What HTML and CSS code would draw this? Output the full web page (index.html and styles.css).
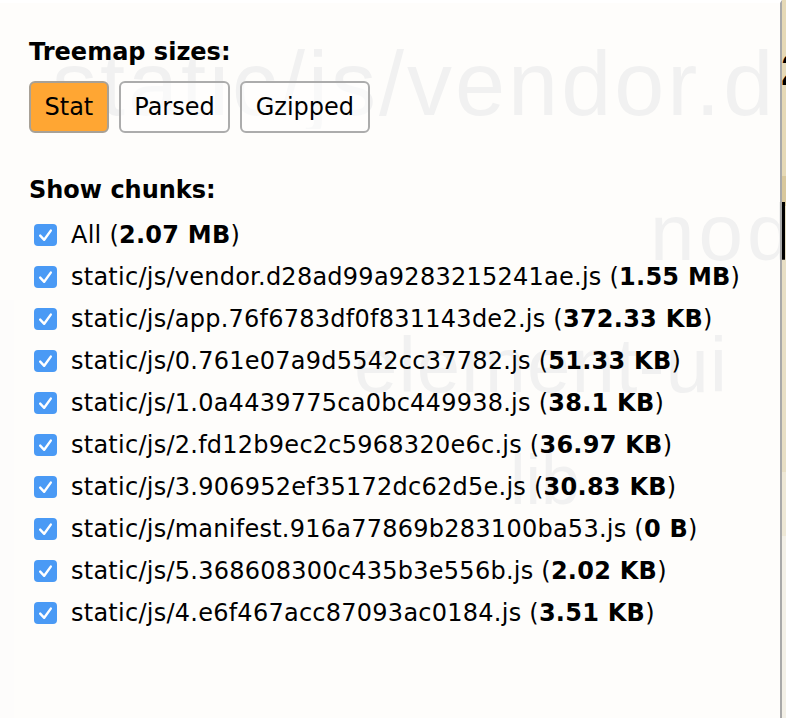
FILE: index.html
```html
<!DOCTYPE html>
<html lang="en">
<head>
<meta charset="utf-8">
<title>Webpack Bundle Analyzer</title>
<link rel="stylesheet" href="styles.css">
</head>
<body>
<div class="app">
  <div class="treemap">
    <div class="cell cell-left"></div>
    <div class="cell cell-r1"></div>
    <div class="cell cell-r2"></div>
    <div class="cell cell-r3"></div>
    <div class="cell cell-r4"></div>
    <div class="cell cell-r5"></div>
    <span class="label label-vendor">static/js/vendor.d28ad99a9283215241ae.js</span>
    <span class="label label-node">node_modules</span>
    <span class="label label-element">element-ui</span>
    <span class="label label-lib">lib</span>
    <span class="label label-small">2</span>
  </div>

  <aside class="sidebar">
    <div class="section-title">Treemap sizes:</div>
    <div class="switcher">
      <button class="switch-btn active">Stat</button>
      <button class="switch-btn">Parsed</button>
      <button class="switch-btn">Gzipped</button>
    </div>

    <div class="section-title chunks-title">Show chunks:</div>
    <ul class="chunks">
      <li class="chunk"><span class="cb"><svg viewBox="0 0 23 22"><path d="M6.2 11.6 L10.2 15.8 L16.8 6.6"/></svg></span><span class="chunk-text">All (<strong>2.07 MB</strong>)</span></li>
      <li class="chunk"><span class="cb"><svg viewBox="0 0 23 22"><path d="M6.2 11.6 L10.2 15.8 L16.8 6.6"/></svg></span><span class="chunk-text">static/js/vendor.d28ad99a9283215241ae.js (<strong>1.55 MB</strong>)</span></li>
      <li class="chunk"><span class="cb"><svg viewBox="0 0 23 22"><path d="M6.2 11.6 L10.2 15.8 L16.8 6.6"/></svg></span><span class="chunk-text">static/js/app.76f6783df0f831143de2.js (<strong>372.33 KB</strong>)</span></li>
      <li class="chunk"><span class="cb"><svg viewBox="0 0 23 22"><path d="M6.2 11.6 L10.2 15.8 L16.8 6.6"/></svg></span><span class="chunk-text">static/js/0.761e07a9d5542cc37782.js (<strong>51.33 KB</strong>)</span></li>
      <li class="chunk"><span class="cb"><svg viewBox="0 0 23 22"><path d="M6.2 11.6 L10.2 15.8 L16.8 6.6"/></svg></span><span class="chunk-text">static/js/1.0a4439775ca0bc449938.js (<strong>38.1 KB</strong>)</span></li>
      <li class="chunk"><span class="cb"><svg viewBox="0 0 23 22"><path d="M6.2 11.6 L10.2 15.8 L16.8 6.6"/></svg></span><span class="chunk-text">static/js/2.fd12b9ec2c5968320e6c.js (<strong>36.97 KB</strong>)</span></li>
      <li class="chunk"><span class="cb"><svg viewBox="0 0 23 22"><path d="M6.2 11.6 L10.2 15.8 L16.8 6.6"/></svg></span><span class="chunk-text">static/js/3.906952ef35172dc62d5e.js (<strong>30.83 KB</strong>)</span></li>
      <li class="chunk"><span class="cb"><svg viewBox="0 0 23 22"><path d="M6.2 11.6 L10.2 15.8 L16.8 6.6"/></svg></span><span class="chunk-text">static/js/manifest.916a77869b283100ba53.js (<strong>0 B</strong>)</span></li>
      <li class="chunk"><span class="cb"><svg viewBox="0 0 23 22"><path d="M6.2 11.6 L10.2 15.8 L16.8 6.6"/></svg></span><span class="chunk-text">static/js/5.368608300c435b3e556b.js (<strong>2.02 KB</strong>)</span></li>
      <li class="chunk"><span class="cb"><svg viewBox="0 0 23 22"><path d="M6.2 11.6 L10.2 15.8 L16.8 6.6"/></svg></span><span class="chunk-text">static/js/4.e6f467acc87093ac0184.js (<strong>3.51 KB</strong>)</span></li>
    </ul>
  </aside>
</div>
</body>
</html>
```

FILE: styles.css
```css
html, body {
  margin: 0;
  padding: 0;
  background: #ffffff;
  overflow: hidden;
}

.app {
  display: grid;
  width: 786px;
  height: 718px;
  overflow: hidden;
}

.treemap,
.sidebar {
  grid-area: 1 / 1;
}

/* Treemap canvas behind the sidebar */
.treemap {
  position: relative;
  background: #e4d7b4;
  overflow: hidden;
}

.cell {
  position: absolute;
}

.cell-left { left: 0; top: 300px; width: 14px; height: 418px; background: #cfc8b3; }
.cell-r1 { left: 781px; top: 0; width: 5px; height: 176px; background: #e6d9b6; }
.cell-r2 { left: 781px; top: 176px; width: 5px; height: 30px; background: #d9c89c; }
.cell-r3 { left: 781px; top: 206px; width: 5px; height: 266px; background: #e8dfc5; }
.cell-r4 { left: 781px; top: 472px; width: 5px; height: 64px; background: #eee8d6; }
.cell-r5 { left: 781px; top: 536px; width: 5px; height: 182px; background: #f3f0e7; }

.label {
  position: absolute;
  font-family: "Liberation Sans", Arial, sans-serif;
  color: #000;
  white-space: nowrap;
  line-height: 1;
  overflow: hidden;
}

.label-vendor {
  left: 52px;
  top: 39px;
  width: 726px;
  font-size: 90px;
  letter-spacing: 3px;
}

.label-node {
  left: 650px;
  top: 193px;
  width: 135px;
  font-size: 80px;
  letter-spacing: 4px;
}

.label-element {
  left: 354px;
  top: 326px;
  font-size: 78px;
  letter-spacing: 1px;
}

.label-lib {
  left: 510px;
  top: 445px;
  font-size: 70px;
}

.label-small {
  left: 781px;
  top: 48px;
  font-size: 44px;
  font-weight: bold;
}

/* Sidebar */
.sidebar {
  justify-self: start;
  box-sizing: border-box;
  width: 782px;
  height: 718px;
  padding: 35px 0 0 29px;
  background: rgba(255, 255, 255, 0.945);
  border-top: 3px solid #ffffff;
  border-right: 2px solid #a9a9a9;
  font-family: "DejaVu Sans", Verdana, sans-serif;
  font-size: 24px;
  color: #000;
  z-index: 1;
}

.section-title {
  font-weight: bold;
  line-height: 28px;
  margin: 0 0 15px 0;
}

.chunks-title {
  margin: 43px 0 10px 0;
}

.switcher {
  display: flex;
  gap: 10px;
}

.switch-btn {
  box-sizing: border-box;
  height: 52px;
  padding: 10px 13.5px;
  font-family: "DejaVu Sans", Verdana, sans-serif;
  font-size: 24px;
  line-height: 28px;
  color: #000;
  background: rgba(255, 255, 255, 0.6);
  border: 2px solid #acacac;
  border-radius: 6px;
}

.switch-btn.active {
  background: #ffa633;
  border-color: #a8a196;
}

.chunks {
  list-style: none;
  margin: 0;
  padding: 0;
}

.chunk {
  display: flex;
  align-items: center;
  height: 42px;
  line-height: 42px;
  white-space: nowrap;
}

.cb {
  display: flex;
  width: 23px;
  height: 22px;
  margin-left: 5px;
  margin-right: 14px;
  border-radius: 4px;
  background: #4a9af5;
  flex: none;
}

.cb svg {
  width: 23px;
  height: 22px;
  fill: none;
  stroke: #ffffff;
  stroke-width: 2.4;
  stroke-linecap: round;
  stroke-linejoin: round;
}

.chunk-text {
  letter-spacing: 0.25px;
}

.chunk-text strong {
  font-weight: bold;
}
```
